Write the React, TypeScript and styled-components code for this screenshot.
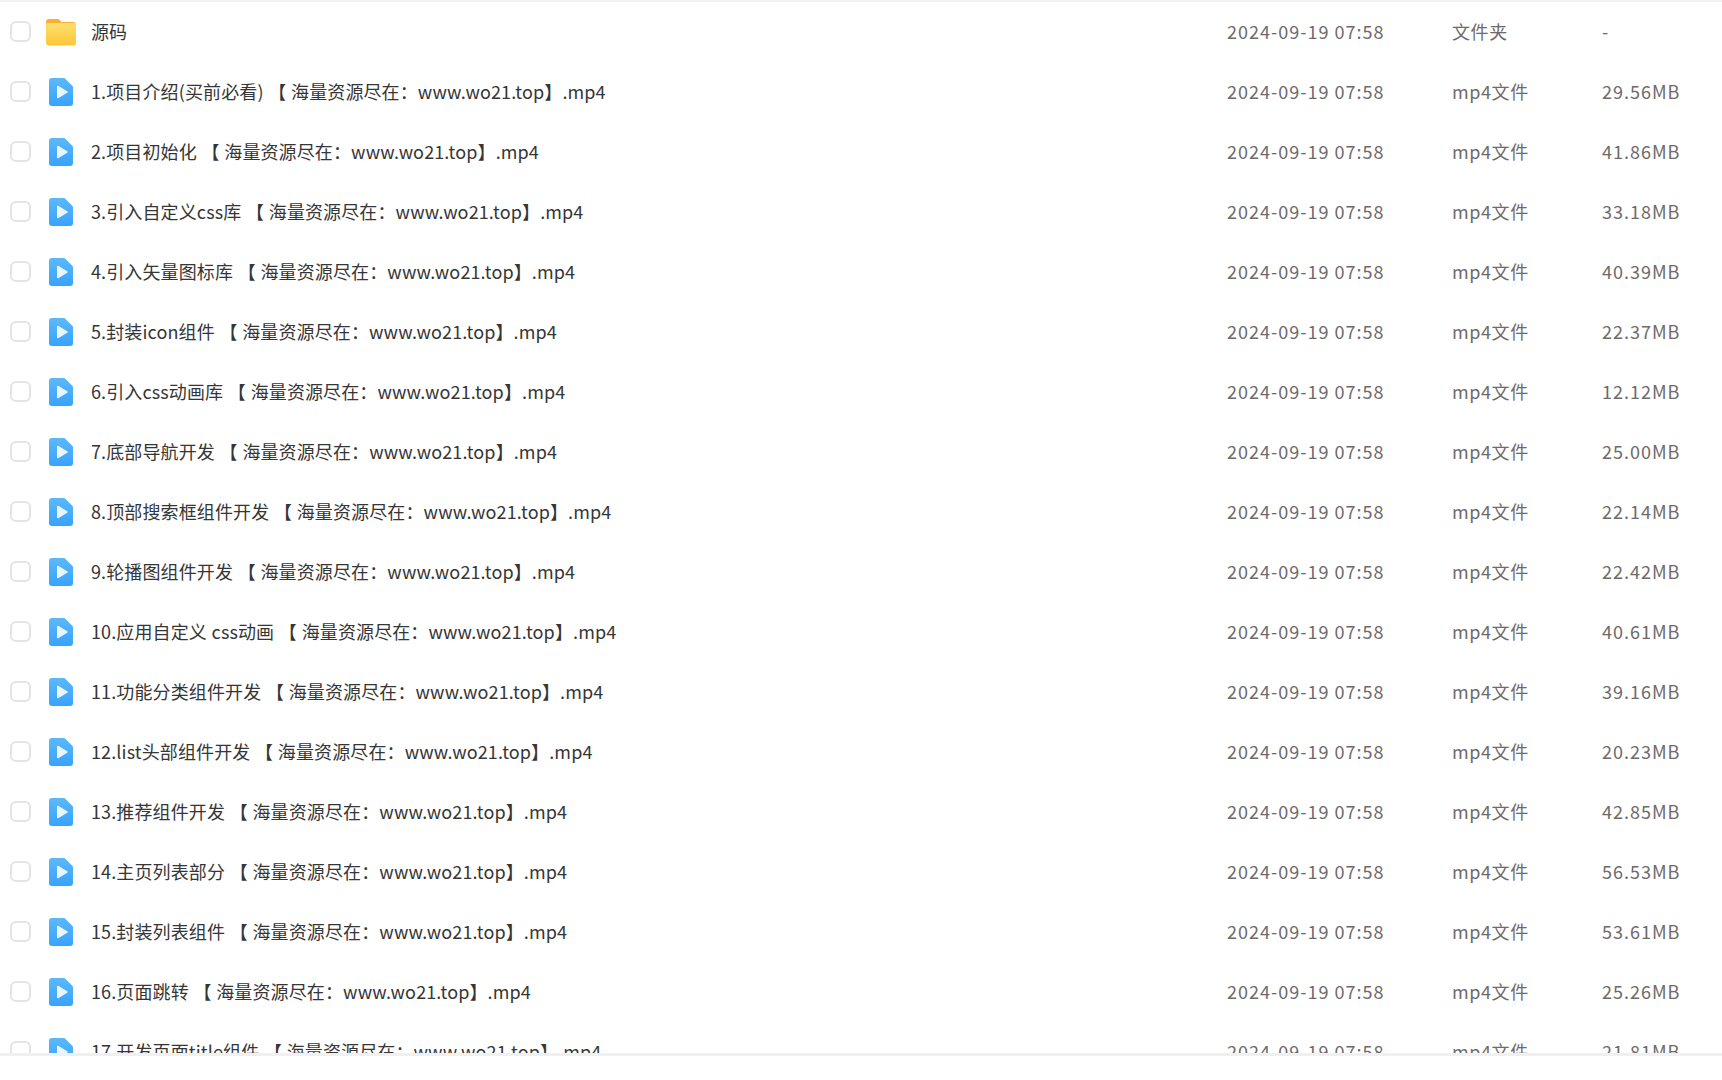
import styled, { createGlobalStyle } from 'styled-components'

const GlobalStyle = createGlobalStyle`
  html, body {
    margin: 0;
    padding: 0;
    background: #fff;
  }
`

const Page = styled.div`
  width: 1722px;
  height: 1080px;
  overflow: hidden;
  background: #fff;
  font-family: "Noto Sans CJK SC", "Noto Sans", sans-serif;
  font-size: 18px;
`

const List = styled.div`
  height: 1051px;
  border-top: 2px solid #f3f3f3;
  border-bottom: 3px solid #f0f0f0;
  overflow: hidden;
`

const Row = styled.div`
  display: grid;
  grid-template-columns: 36px 45px 1136px 225px 150px 1fr;
  align-items: center;
  height: 60px;
  padding-left: 10px;
  box-sizing: border-box;
`

const Check = styled.span`
  width: 21px;
  height: 21px;
  box-sizing: border-box;
  border: 2px solid #e4e4e4;
  border-radius: 6px;
  margin-top: -1px;
`

const IconSlot = styled.span`
  display: flex;
  align-items: center;
  height: 30px;
`

const Name = styled.span`
  color: #363636;
  white-space: nowrap;
  word-spacing: 0.5px;
  letter-spacing: 0.12px;
  margin-bottom: 2px;
`

const Meta = styled.span<{ $spacing?: number }>`
  color: #6e6a6a;
  white-space: nowrap;
  letter-spacing: ${(p) => p.$spacing ?? 1}px;
  margin-bottom: 2px;
`

const VideoSvg = styled.svg`
  margin-left: 3px;
`

const FolderIcon = () => (
  <svg width="30" height="28" viewBox="0 0 30 28">
    <defs>
      <linearGradient id="folderFill" x1="0" y1="0" x2="0" y2="1">
        <stop offset="0" stopColor="#ffdf70" />
        <stop offset="1" stopColor="#fdc636" />
      </linearGradient>
    </defs>
    <path d="M0 4a3 3 0 0 1 3-3h8c1.4 0 2.2.5 3 1.500L15.500 4H27a3 3 0 0 1 3 3v3H0z" fill="#f9b02f" />
    <path d="M0 7a2 2 0 0 1 2-2h26a2 2 0 0 1 2 2v17.500a3 3 0 0 1-3 3H3a3 3 0 0 1-3-3z" fill="url(#folderFill)" />
  </svg>
)

const VideoIcon = () => (
  <VideoSvg width="24" height="28" viewBox="0 0 24 28">
    <defs>
      <linearGradient id="videoFill" x1="0" y1="0" x2="0" y2="1">
        <stop offset="0" stopColor="#5cb8fb" />
        <stop offset="1" stopColor="#37a3fd" />
      </linearGradient>
    </defs>
    <path d="M3 0h12.500L24 8.500V25a3 3 0 0 1-3 3H3a3 3 0 0 1-3-3V3a3 3 0 0 1 3-3z" fill="url(#videoFill)" />
    <path d="M8 8.500a.8.8 0 0 1 1.200-.7l9 5.400a.9.9 0 0 1 0 1.600l-9 5.400a.8.8 0 0 1-1.200-.7z" fill="#e9f5ff" />
  </VideoSvg>
)

const suffix = ' 【 海量资源尽在：www.wo21.top】.mp4'

const files: [string, string][] = [
  ['1.项目介绍(买前必看)', '29.56MB'],
  ['2.项目初始化', '41.86MB'],
  ['3.引入自定义css库', '33.18MB'],
  ['4.引入矢量图标库', '40.39MB'],
  ['5.封装icon组件', '22.37MB'],
  ['6.引入css动画库', '12.12MB'],
  ['7.底部导航开发', '25.00MB'],
  ['8.顶部搜索框组件开发', '22.14MB'],
  ['9.轮播图组件开发', '22.42MB'],
  ['10.应用自定义 css动画', '40.61MB'],
  ['11.功能分类组件开发', '39.16MB'],
  ['12.list头部组件开发', '20.23MB'],
  ['13.推荐组件开发', '42.85MB'],
  ['14.主页列表部分', '56.53MB'],
  ['15.封装列表组件', '53.61MB'],
  ['16.页面跳转', '25.26MB'],
  ['17.开发页面title组件', '21.81MB'],
]

const FileRow = ({ icon, name, type, size }: { icon: React.ReactNode; name: string; type: string; size: string }) => (
  <Row>
    <Check />
    <IconSlot>{icon}</IconSlot>
    <Name>{name}</Name>
    <Meta>2024-09-19 07:58</Meta>
    <Meta $spacing={0.6}>{type}</Meta>
    <Meta>{size}</Meta>
  </Row>
)

export default function App() {
  return (
    <Page>
      <GlobalStyle />
      <List>
        <FileRow icon={<FolderIcon />} name="源码" type="文件夹" size="-" />
        {files.map(([title, size]) => (
          <FileRow key={title} icon={<VideoIcon />} name={title + suffix} type="mp4文件" size={size} />
        ))}
      </List>
    </Page>
  )
}
